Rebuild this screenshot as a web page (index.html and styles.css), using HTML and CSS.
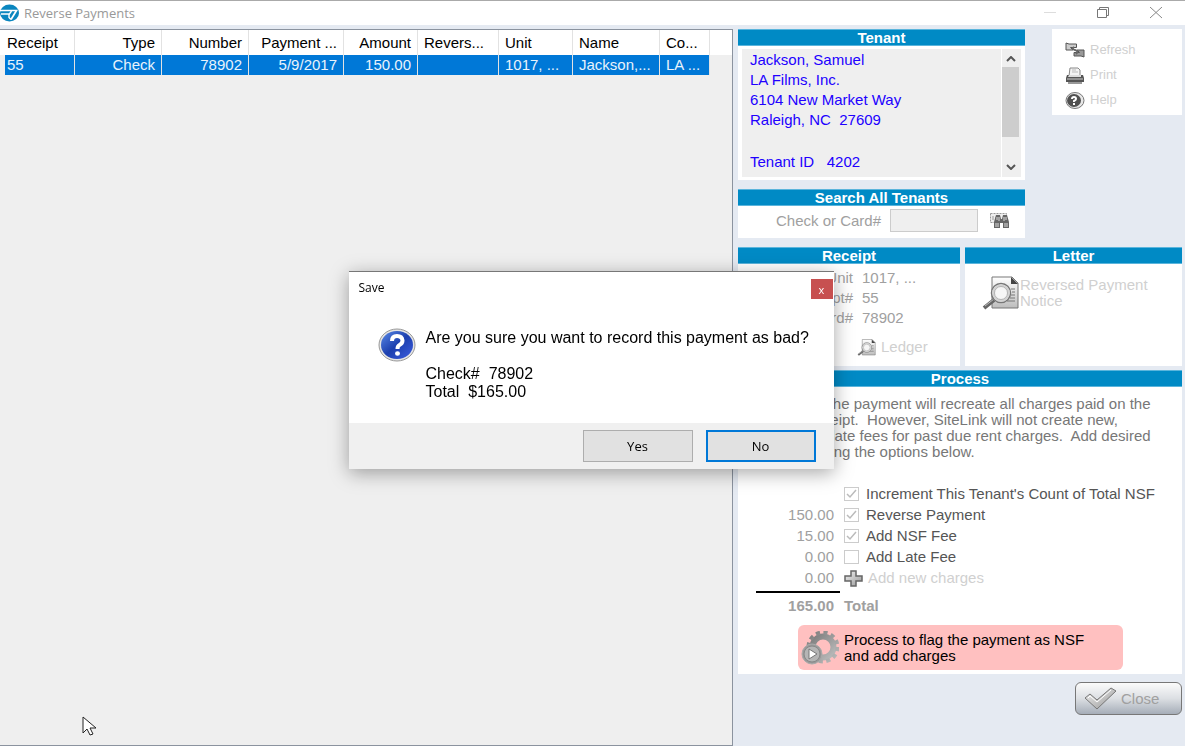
FILE: index.html
```html
<!DOCTYPE html>
<html lang="en">
<head>
  <meta charset="UTF-8">
  <title>Reverse Payments</title>
  <link rel="stylesheet" href="styles.css">
</head>
<body>
  <svg class="defs" width="0" height="0" aria-hidden="true">
    <defs>
      <linearGradient id="steel" x1="0" y1="0" x2="1" y2="1">
        <stop offset="0" stop-color="#f4f4f4"/>
        <stop offset="1" stop-color="#959595"/>
      </linearGradient>
      <linearGradient id="paper" x1="0" y1="0" x2="0" y2="1">
        <stop offset="0" stop-color="#ffffff"/>
        <stop offset="1" stop-color="#bdbdbd"/>
      </linearGradient>
      <linearGradient id="gearFill" x1="0" y1="0" x2="1" y2="1">
        <stop offset="0" stop-color="#7d7d7d"/>
        <stop offset="1" stop-color="#bcbcbc"/>
      </linearGradient>
      <linearGradient id="blueBall" x1="0" y1="0" x2="1" y2="1">
        <stop offset="0" stop-color="#5b8be8"/>
        <stop offset="0.5" stop-color="#1c3fae"/>
        <stop offset="1" stop-color="#3d5ee0"/>
      </linearGradient>
      <symbol id="docSearch" viewBox="0 0 37 34">
        <path d="M10 1h20l6 6v25H10z" fill="url(#paper)" stroke="#777"/>
        <path d="M29 1v7h7z" fill="#444"/>
        <path d="M29 13h4M30 16h3M29 19h4M28 22h5M25 25h8" stroke="#777"/>
        <path d="M12 24L2 32" stroke="#666" stroke-width="4"/>
        <path d="M12 23L3 30" stroke="#bbb" stroke-width="1"/>
        <circle cx="19" cy="17" r="9.500" fill="#f6f6f6" stroke="#777" stroke-width="1.500"/>
        <circle cx="19" cy="17" r="7.700" fill="none" stroke="#d2d2d2" stroke-width="2"/>
        <circle cx="19" cy="17" r="6.500" fill="none" stroke="#999" stroke-width="0.700"/>
      </symbol>
    </defs>
  </svg>

  <header class="titlebar">
    <svg class="logo" width="19" height="18" viewBox="0 0 19 18">
      <ellipse cx="9.500" cy="9" rx="9.500" ry="8.500" fill="#0a86bf"/>
      <path d="M0 6.500h16.500L11 15.500" fill="none" stroke="#fff" stroke-width="1.700"/>
      <path d="M1 10h8.500l2-3M9 10v3.500l2 2" fill="none" stroke="#fff" stroke-width="1.400"/>
    </svg>
    <h1>Reverse Payments</h1>
    <div class="window-buttons">
      <button type="button" aria-label="Minimize">
        <svg width="12" height="12"><path d="M0 5.500h12" stroke="#ddd"/></svg>
      </button>
      <button type="button" aria-label="Restore">
        <svg width="12" height="12" fill="none" stroke="#777"><path d="M.5 2.500h9v8h-9zM2.500 2.500v-2h9v8h-2"/></svg>
      </button>
      <button type="button" aria-label="Close window">
        <svg width="12" height="12" stroke="#888"><path d="M0 0l12 11M12 0L0 11"/></svg>
      </button>
    </div>
  </header>

  <main class="layout">
    <section class="list">
      <table>
        <colgroup>
          <col class="w70"><col class="w87"><col class="w87"><col class="w95"><col class="w74">
          <col class="w81"><col class="w74"><col class="w87"><col class="w50">
        </colgroup>
        <thead>
          <tr>
            <th>Receipt</th>
            <th class="num">Type</th>
            <th class="num">Number</th>
            <th class="num">Payment ...</th>
            <th class="num">Amount</th>
            <th>Revers...</th>
            <th>Unit</th>
            <th>Name</th>
            <th>Co...</th>
          </tr>
        </thead>
        <tbody>
          <tr class="selected">
            <td class="flush">55</td>
            <td class="num">Check</td>
            <td class="num">78902</td>
            <td class="num">5/9/2017</td>
            <td class="num">150.00</td>
            <td></td>
            <td>1017, ...</td>
            <td>Jackson,...</td>
            <td>LA ...</td>
          </tr>
        </tbody>
      </table>
    </section>

    <aside class="side">
      <div class="top-row">
        <div class="top-left">
          <section class="panel">
            <h2>Tenant</h2>
            <div class="tenant-box">
              <div class="tenant-text">
                <p>Jackson, Samuel<br>LA Films, Inc.<br>6104 New Market Way<br>Raleigh, NC&nbsp; 27609</p>
                <p class="tenant-id">Tenant ID &nbsp; 4202</p>
              </div>
              <div class="scrollbar">
                <svg width="10" height="6" fill="none" stroke="#555" stroke-width="2"><path d="M1 5l4-4 4 4"/></svg>
                <div class="thumb"></div>
                <svg width="10" height="6" fill="none" stroke="#555" stroke-width="2"><path d="M1 1l4 4 4-4"/></svg>
              </div>
            </div>
          </section>

          <section class="panel">
            <h2>Search All Tenants</h2>
            <div class="search-row">
              <label for="checkCard">Check or Card#</label>
              <input type="text" id="checkCard" disabled>
              <button type="button" aria-label="Search" disabled>
                <svg width="20" height="18" viewBox="0 0 20 18">
                  <path d="M.5 1.500h16v9H.5z" fill="#eee" stroke="#999" stroke-dasharray="2 1"/>
                  <path d="M3 4v4M5 6h2" stroke="#999"/>
                  <path d="M6 3h4l1 4h1l1-4h4l2 7v6h-6v-5h-3v5H4v-6z" fill="#666"/>
                  <path d="M7 5v3M9 5v4M14 5v4M16 5v3M6 11v4M8 11v4M15 11v4M17 11v4" stroke="#ddd"/>
                </svg>
              </button>
            </div>
          </section>
        </div>

        <nav class="tools">
          <button type="button" disabled>
            <svg width="20" height="17" viewBox="0 0 20 17">
              <path d="M1 1v7h7L5.500 5.500h6V2H4z" fill="#ccc" stroke="#555"/>
              <path d="M19 15V8h-7l2.500 2.500H9V14h7z" fill="#999" stroke="#555"/>
              <path d="M9 5q-3 2 1 3t1 4" fill="none" stroke="#666" stroke-width="2"/>
            </svg>
            Refresh
          </button>
          <button type="button" disabled>
            <svg width="20" height="17" viewBox="0 0 20 17">
              <path d="M5 1h8l2 2v6H4z" fill="#f4f4f4" stroke="#888"/>
              <path d="M7 3h4M7 5h6" stroke="#bbb"/>
              <path d="M2 8h16l1 3v4H1v-4z" fill="#555"/>
              <path d="M4 8h12v2H3z" fill="#ddd"/>
              <path d="M2 12h16" stroke="#ccc"/>
              <path d="M3 16h14" stroke="#333"/>
            </svg>
            Print
          </button>
          <button type="button" disabled>
            <svg width="20" height="17" viewBox="0 0 20 17">
              <ellipse cx="10" cy="8.500" rx="9" ry="8" fill="#e8e8e8" stroke="#777"/>
              <ellipse cx="9" cy="8.500" rx="7" ry="6.500" fill="#505050"/>
              <path d="M7 7q0-2 2-2t2 2q0 1-2 2v1M9 11v2" fill="none" stroke="#fff" stroke-width="2"/>
            </svg>
            Help
          </button>
        </nav>
      </div>

      <div class="mid-row">
        <section class="panel receipt">
          <h2>Receipt</h2>
          <dl>
            <dt>Unit</dt><dd>1017, ...</dd>
            <dt>Receipt#</dt><dd>55</dd>
            <dt>Check/Card#</dt><dd>78902</dd>
          </dl>
          <button type="button" class="ledger" disabled>
            <svg width="19" height="17"><use href="#docSearch"/></svg>
            Ledger
          </button>
        </section>

        <section class="panel letter">
          <h2>Letter</h2>
          <button type="button" class="notice" disabled>
            <svg width="37" height="34"><use href="#docSearch"/></svg>
            <span>Reversed Payment<br>Notice</span>
          </button>
        </section>
      </div>

      <section class="panel process">
        <h2>Process</h2>
        <p class="info">Reversing the payment will recreate all charges paid on the<br>original receipt.&nbsp; However, SiteLink will not create new,<br>retroactive late fees for past due rent charges.&nbsp; Add desired<br>charges using the options below.</p>

        <div class="charges">
          <span></span>
          <label><input type="checkbox" checked disabled>Increment This Tenant's Count of Total NSF</label>
          <span>150.00</span>
          <label><input type="checkbox" checked disabled>Reverse Payment</label>
          <span>15.00</span>
          <label><input type="checkbox" checked disabled>Add NSF Fee</label>
          <span>0.00</span>
          <label><input type="checkbox" disabled>Add Late Fee</label>
          <span>0.00</span>
          <button type="button" class="add-charge" disabled>
            <svg width="19" height="17" viewBox="0 0 19 17">
              <path d="M7 1h5v5h6v5h-6v5H7v-5H1V6h6z" fill="url(#steel)" stroke="#666" stroke-width="1.500"/>
            </svg>
            Add new charges
          </button>
        </div>
        <div class="total"><span>165.00</span><span>Total</span></div>

        <button type="button" class="process-btn">
          <svg width="38" height="34" viewBox="0 0 38 34">
            <g fill="none" stroke="url(#gearFill)">
              <circle cx="22" cy="16" r="10.500" stroke-width="6"/>
              <circle cx="22" cy="16" r="14.500" stroke-width="4" stroke-dasharray="4.110 3.482"/>
            </g>
            <circle cx="11" cy="23" r="10" fill="#999" stroke="#aaa"/>
            <circle cx="11" cy="23" r="8" fill="#b5b5b5" stroke="#888"/>
            <path d="M8 18v10l8-5z" fill="#fff" stroke="#777"/>
          </svg>
          <span>Process to flag the payment as NSF<br>and add charges</span>
        </button>
      </section>

      <button type="button" class="close-btn" disabled>
        <svg width="33" height="23" viewBox="0 0 33 23">
          <path d="M1 11l5-4 7 6L27 1l5 3-19 18z" fill="url(#steel)" stroke="#777"/>
          <path d="M4 11l2-2 7 6L27 3" fill="none" stroke="#fff"/>
        </svg>
        Close
      </button>
    </aside>
  </main>

  <div class="overlay">
    <div class="dialog" role="dialog" aria-labelledby="dialogTitle">
      <div class="dialog-title">
        <h2 id="dialogTitle">Save</h2>
        <button type="button" class="dialog-x" aria-label="Close dialog">x</button>
      </div>
      <div class="dialog-body">
        <svg width="38" height="34" viewBox="0 0 38 34">
          <ellipse cx="19" cy="17" rx="18" ry="16" fill="#e4e4e4" stroke="#999"/>
          <ellipse cx="19" cy="17" rx="16" ry="14" fill="url(#blueBall)"/>
          <path d="M14 13q0-5 5-5t5.500 4.500q0 3-3 4.500-2 1-2 4" fill="none" stroke="#fff" stroke-width="4"/>
          <ellipse cx="19.500" cy="25.500" rx="2.500" ry="2.200" fill="#fff"/>
        </svg>
        <p>Are you sure you want to record this payment as bad?<br><br>Check#&nbsp; 78902<br>Total&nbsp; $165.00</p>
      </div>
      <div class="dialog-footer">
        <button type="button">Yes</button>
        <button type="button" class="default">No</button>
      </div>
    </div>
  </div>

  <svg class="cursor" width="15" height="21" viewBox="0 0 15 21">
    <path d="M1 1v16l4-4 3 6 3-1-3-6h6z" fill="#fff" stroke="#222"/>
  </svg>
</body>
</html>
```
FILE: styles.css
```css
* {
  box-sizing: border-box;
}

body {
  margin: 0;
  height: 100vh;
  overflow: hidden;
  display: flex;
  flex-direction: column;
  background: #e5eaf2;
  color: #000;
  font-family: "Liberation Sans", Arial, sans-serif;
  font-size: 15px;
  line-height: 20px;
}

h1, h2, p, dl, dd {
  margin: 0;
}

button {
  font: inherit;
  color: inherit;
  background: none;
  border: none;
  padding: 0;
  display: flex;
  align-items: center;
  text-align: left;
}

svg {
  flex: none;
  display: block;
}

.defs {
  position: absolute;
}

/* title bar */
.titlebar {
  height: 25px;
  flex: none;
  display: flex;
  align-items: center;
  gap: 5px;
  padding-right: 3px;
  background: #fff;
  border-top: 1px solid #aaa;
}

.titlebar h1 {
  flex: 1;
  font: 13px "Open Sans", sans-serif;
  color: #999;
}

.window-buttons {
  display: flex;
}

.window-buttons button {
  width: 53px;
  height: 24px;
  justify-content: center;
}

.layout {
  flex: 1;
  display: flex;
  padding-top: 4px;
}

/* payment list */
.list {
  flex: 1;
  padding-left: 5px;
  border: 1px solid #8b939f;
  border-left: none;
  background: linear-gradient(#fff 25px, #efefef 25px);
}

table {
  width: 703px;
  table-layout: fixed;
  border-collapse: separate;
  border-spacing: 0;
}

.w50 { width: 50px; }
.w70 { width: 70px; }
.w74 { width: 74px; }
.w81 { width: 81px; }
.w87 { width: 87px; }
.w95 { width: 95px; }

th, td {
  padding: 0 6px;
  text-align: left;
  font-weight: normal;
  white-space: nowrap;
  overflow: hidden;
  border-right: 1px solid #e2e2e2;
}

th {
  height: 25px;
}

th:first-child {
  padding-left: 2px;
}

td {
  height: 20px;
}

td.flush {
  padding-left: 2px;
}

.num {
  text-align: right;
}

.selected {
  background: #0078d7;
  color: #e8f3fc;
}

/* right side */
.side {
  width: 452px;
  padding: 0 3px 0 5px;
  display: flex;
  flex-direction: column;
}

.top-row {
  display: flex;
  justify-content: space-between;
  align-items: flex-start;
  margin-bottom: 9px;
}

.top-left {
  width: 287px;
  display: flex;
  flex-direction: column;
  gap: 9px;
}

.panel {
  background: #fff;
}

.panel h2 {
  height: 17px;
  font-size: 15px;
  line-height: 15px;
  text-align: center;
  color: #fff;
  background: #008ac5;
  border: 1px solid #5bb5dc;
  border-width: 1px 0;
}

.tenant-box {
  display: flex;
  margin: 3px 4px;
  height: 128px;
  background: #efefef;
}

.panel:first-child .tenant-box {
  margin-bottom: 0;
}

.top-left .panel:first-child {
  padding-bottom: 3px;
}

.tenant-text {
  flex: 1;
  padding: 1px 8px;
  color: #2100ff;
}

.tenant-id {
  margin-top: 22px;
}

.scrollbar {
  width: 20px;
  padding: 7px 2px 7px 0;
  border-left: 1px solid #fff;
  display: flex;
  flex-direction: column;
  align-items: center;
}

.thumb {
  width: 17px;
  height: 70px;
  margin-top: 5px;
  margin-bottom: auto;
  background: #cdcdcd;
}

.search-row {
  display: flex;
  align-items: center;
  justify-content: flex-end;
  gap: 9px;
  height: 32px;
  padding: 0 15px 3px 0;
  color: #a0a0a0;
}

.search-row input {
  width: 88px;
  height: 23px;
  margin-right: 3px;
  background: #efefef;
  border: 1px solid #ccc;
}

.tools {
  width: 130px;
  height: 86px;
  padding: 11px 13px;
  display: flex;
  flex-direction: column;
  gap: 5px;
  background: #fff;
  font-size: 13px;
  color: #d0d0d0;
}

.tools button {
  gap: 5px;
}

.mid-row {
  display: flex;
  gap: 5px;
  height: 119px;
  margin-bottom: 4px;
}

.receipt {
  width: 222px;
  color: #a0a0a0;
}

.letter {
  flex: 1;
}

dl {
  display: grid;
  grid-template-columns: 115px 1fr;
  column-gap: 9px;
  padding-top: 4px;
}

dt {
  text-align: right;
}

.ledger {
  gap: 5px;
  margin: 9px 0 0 119px;
  color: #d0d0d0;
}

.notice {
  gap: 1px;
  margin: 12px 0 0 17px;
  line-height: 16px;
  color: #d0d0d0;
}

.process {
  height: 304px;
}

.info {
  padding: 9px 0 0 19px;
  line-height: 16px;
  white-space: nowrap;
  color: #777;
}

.charges {
  display: grid;
  grid-template-columns: 96px 1fr;
  column-gap: 10px;
  row-gap: 1px;
  margin-top: 24px;
  color: #a0a0a0;
}

.charges > span {
  text-align: right;
}

.charges label {
  display: flex;
  align-items: center;
  gap: 7px;
  color: #555;
}

.charges input {
  appearance: none;
  width: 15px;
  height: 14px;
  margin: 0;
  border: 1px solid #ccc;
  background: #fff;
}

.charges input:checked {
  background: url("data:image/svg+xml,%3Csvg xmlns='http://www.w3.org/2000/svg' viewBox='0 0 13 12'%3E%3Cpath d='M2 6l3 3 6-7' fill='none' stroke='%23bbb' stroke-width='1.500'/%3E%3C/svg%3E");
}

.add-charge {
  gap: 5px;
  color: #d0d0d0;
}

.total {
  display: grid;
  grid-template-columns: 78px 1fr;
  column-gap: 10px;
  margin: 3px 0 0 18px;
  padding-top: 5px;
  font-weight: bold;
  color: #a0a0a0;
  background: linear-gradient(#000, #000) no-repeat 0 0 / 84px 2px;
}

.total span:first-child {
  text-align: right;
}

.process-btn {
  width: 325px;
  height: 45px;
  margin: 9px 0 0 60px;
  padding-left: 3px;
  gap: 5px;
  line-height: 16px;
  border-radius: 6px;
  background: #ffc0c0;
}

.close-btn {
  align-self: flex-end;
  width: 107px;
  height: 33px;
  margin-top: 8px;
  padding-left: 8px;
  gap: 4px;
  color: #a0a0a0;
  border: 1px solid #777;
  border-radius: 6px;
  background: linear-gradient(#fbfbfb, #dcdfe3 50%, #a5adb8);
}

/* confirmation dialog */
.overlay {
  position: fixed;
  inset: 0;
  display: flex;
  align-items: center;
  justify-content: center;
  padding: 0 3px 6px 0;
}

.dialog {
  width: 485px;
  background: #fff;
  border-top: 1px solid #777;
  box-shadow: 0 4px 18px rgba(0, 0, 0, 0.35);
}

.dialog-title {
  display: flex;
  justify-content: space-between;
  padding: 7px 1px 0 10px;
}

.dialog-title h2 {
  font: 12px/18px "Open Sans", sans-serif;
}

.dialog-x {
  width: 22px;
  height: 20px;
  justify-content: center;
  font: 11px "Open Sans", sans-serif;
  color: #fff;
  background: #c75050;
}

.dialog-body {
  display: flex;
  align-items: flex-start;
  gap: 10px;
  height: 124px;
  padding: 29px 0 0 29px;
}

.dialog-body p {
  padding-top: 1px;
  font-size: 16px;
  line-height: 18px;
  white-space: nowrap;
}

.dialog-footer {
  display: flex;
  justify-content: flex-end;
  gap: 13px;
  padding: 7px 18px;
  background: #f0f0f0;
}

.dialog-footer button {
  width: 110px;
  height: 32px;
  justify-content: center;
  font: 13px "Open Sans", sans-serif;
  background: #e1e1e1;
  border: 1px solid #adadad;
}

.dialog-footer .default {
  border: 2px solid #0078d7;
}

/* mouse pointer */
.cursor {
  position: fixed;
  left: 82px;
  top: 716px;
}
```
